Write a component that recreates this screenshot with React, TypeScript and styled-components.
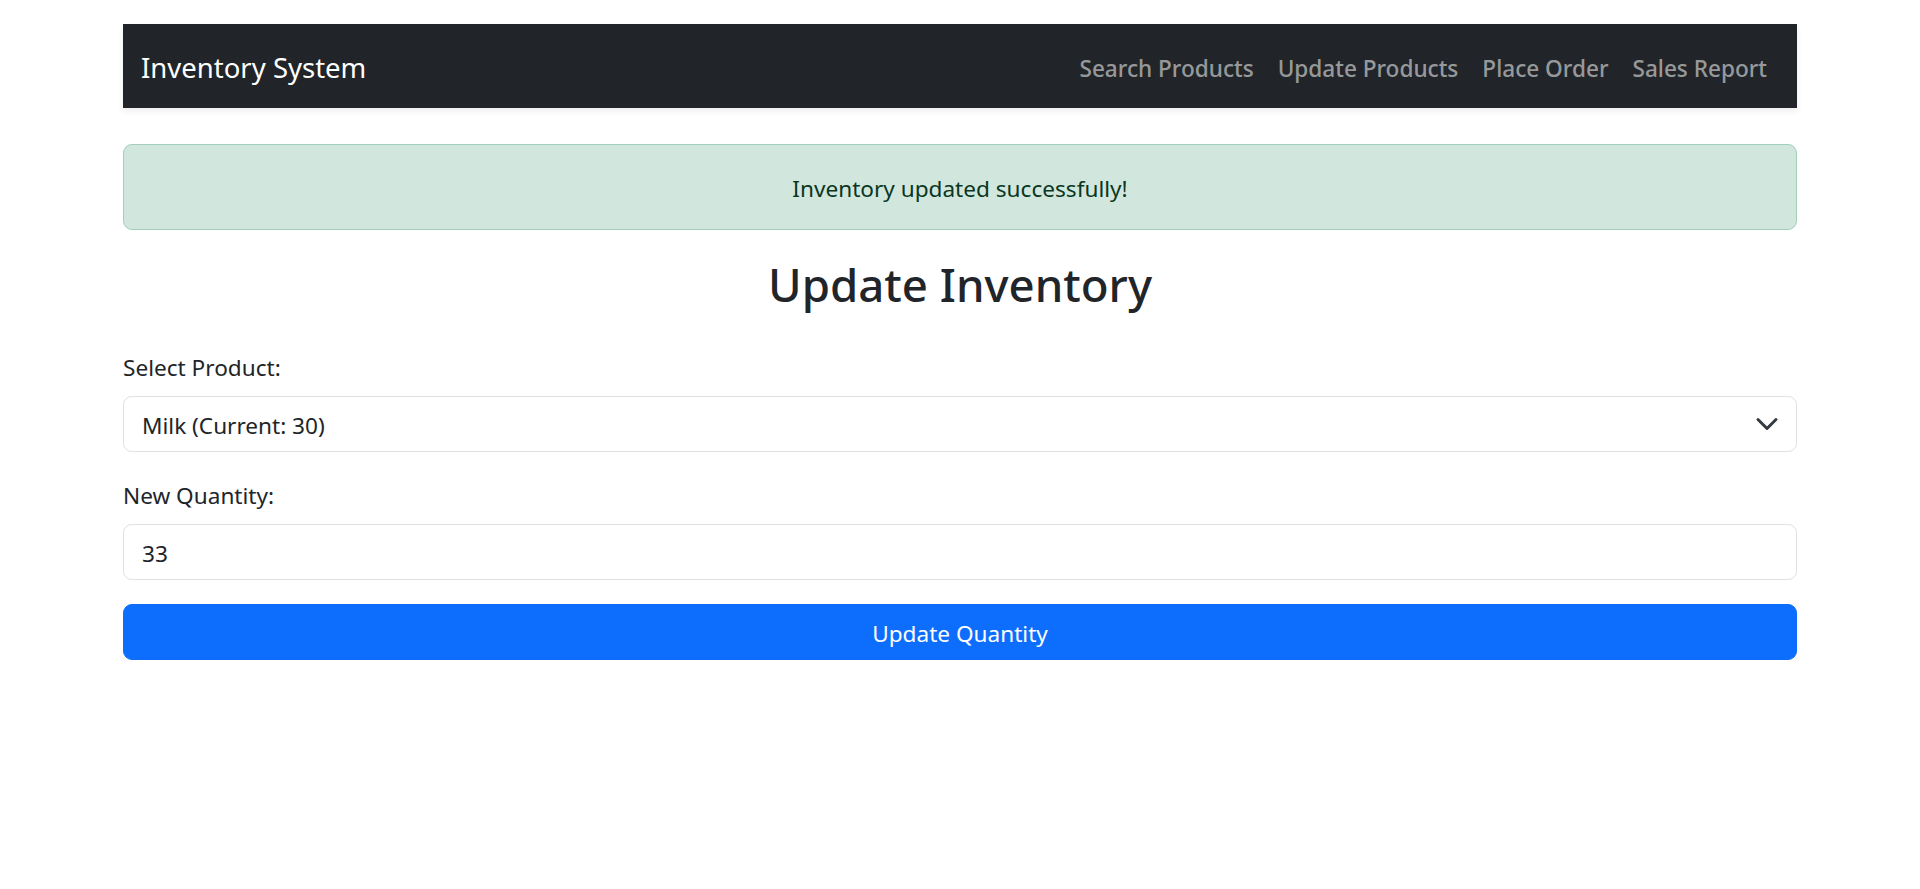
import React, { useState } from "react";
import styled, { createGlobalStyle } from "styled-components";

const FONT = `"Noto Sans", "Open Sans", "Liberation Sans", sans-serif`;
const BODY_SIZE = "22.6px";

const GlobalStyle = createGlobalStyle`
  *, *::before, *::after { box-sizing: border-box; }
  html, body { margin: 0; padding: 0; background: #fff; }
  body {
    font-family: ${FONT};
    font-size: ${BODY_SIZE};
    line-height: 36px;
    color: #212529;
  }
`;

const Container = styled.div`
  max-width: 1710px;
  margin: 0 auto;
  padding: 0 18px;
`;

const Navbar = styled.nav`
  margin-top: 24px;
  height: 84px;
  background: #212529;
  box-shadow: 0 3px 6px rgba(0, 0, 0, 0.075);
  padding: 12px 18px;
  display: flex;
  align-items: center;
  justify-content: space-between;
`;

const Brand = styled.a`
  font-size: 27.5px;
  line-height: 45px;
  padding: 8.5px 0 6.5px;
  color: #fff;
  text-decoration: none;
`;

const NavList = styled.ul`
  list-style: none;
  margin: 0;
  padding: 0;
  display: flex;
  align-items: center;
`;

const NavLink = styled.a`
  display: block;
  padding: 15px 12px 9px;
  font-size: ${BODY_SIZE};
  line-height: 36px;
  font-weight: 500;
  color: rgba(255, 255, 255, 0.55);
  text-decoration: none;
`;

const Alert = styled.div`
  margin-top: 36px;
  margin-bottom: 24px;
  padding: 26px 24px 22px;
  border: 1px solid #a3cfbb;
  border-radius: 9px;
  background: #d1e7dd;
  color: #0a3622;
  text-align: center;
  line-height: 36px;
`;

const Title = styled.h2`
  margin: 0 0 36px;
  padding-top: 2px;
  height: 57.6px;
  font-size: 45.6px;
  font-weight: 500;
  line-height: 57.6px;
  text-align: center;
  color: #212529;
`;

const Field = styled.div`
  margin-bottom: 24px;
`;

const Label = styled.label`
  display: block;
  margin-bottom: 10px;
  padding-top: 2px;
  line-height: 36px;
`;

const SelectWrap = styled.div`
  position: relative;
`;

const controlBase = `
  display: block;
  width: 100%;
  height: 56px;
  padding: 11px 18px 7px;
  font-family: ${FONT};
  font-size: ${BODY_SIZE};
  line-height: 36px;
  color: #212529;
  background: #fff;
  border: 1px solid #dee2e6;
  border-radius: 9px;
  outline: none;
`;

const Select = styled.select`
  ${controlBase}
  appearance: none;
  -webkit-appearance: none;
  padding-right: 60px;
`;

const Chevron = styled.svg`
  position: absolute;
  right: 18px;
  top: 50%;
  width: 24px;
  height: 24px;
  transform: translateY(-50%);
  pointer-events: none;
`;

const Input = styled.input`
  ${controlBase}
`;

const Button = styled.button`
  display: block;
  width: 100%;
  height: 56px;
  padding: 11px 18px 7px;
  font-family: ${FONT};
  font-size: ${BODY_SIZE};
  line-height: 36px;
  color: #fff;
  background: #0d6efd;
  border: 1px solid #0d6efd;
  border-radius: 9px;
  cursor: pointer;
`;

const links = ["Search Products", "Update Products", "Place Order", "Sales Report"];

export default function App() {
  const [product, setProduct] = useState("milk");
  const [qty, setQty] = useState("33");
  return (
    <>
      <GlobalStyle />
      <Container>
        <Navbar>
          <Brand href="#">Inventory System</Brand>
          <NavList>
            {links.map((l) => (
              <li key={l}>
                <NavLink href="#">{l}</NavLink>
              </li>
            ))}
          </NavList>
        </Navbar>
        <Alert>Inventory updated successfully!</Alert>
        <Title>Update Inventory</Title>
        <form onSubmit={(e) => e.preventDefault()}>
          <Field>
            <Label htmlFor="product">Select Product:</Label>
            <SelectWrap>
              <Select id="product" value={product} onChange={(e) => setProduct(e.target.value)}>
                <option value="milk">Milk (Current: 30)</option>
                <option value="bread">Bread (Current: 20)</option>
                <option value="eggs">Eggs (Current: 50)</option>
              </Select>
              <Chevron viewBox="0 0 16 16" fill="none">
                <path d="m2 5 6 6 6-6" stroke="#343a40" strokeWidth="2" strokeLinecap="round" strokeLinejoin="round" />
              </Chevron>
            </SelectWrap>
          </Field>
          <Field>
            <Label htmlFor="qty">New Quantity:</Label>
            <Input id="qty" type="text" value={qty} onChange={(e) => setQty(e.target.value)} />
          </Field>
          <Button type="submit">Update Quantity</Button>
        </form>
      </Container>
    </>
  );
}
